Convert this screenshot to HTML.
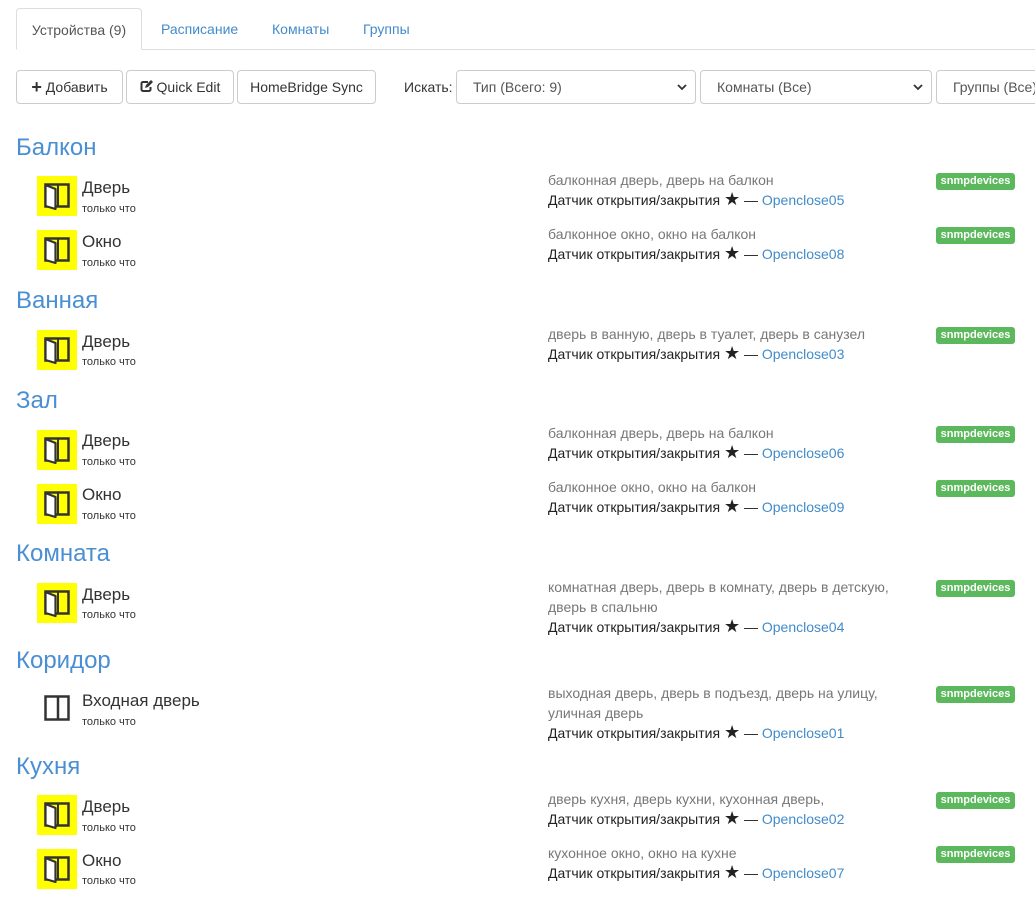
<!DOCTYPE html>
<html><head><meta charset="utf-8"><style>
*{box-sizing:border-box;margin:0;padding:0}
body{width:1035px;height:910px;overflow:hidden;background:#fff;font-family:"Liberation Sans",Arial,sans-serif;color:#333;position:relative}
.a{position:absolute;white-space:nowrap}
.tabline{position:absolute;left:16px;right:0;top:49px;border-top:1px solid #ddd}
.tab{position:absolute;top:8px;height:42px;font-size:14px;line-height:42px;color:#428bca}
.tab.act{left:16px;width:126px;border:1px solid #ddd;border-bottom-color:#fff;border-radius:4px 4px 0 0;background:#fff;color:#555;text-align:center}
.btn{position:absolute;top:70px;height:34px;border:1px solid #ccc;border-radius:4px;font-size:14px;line-height:32px;text-align:center;color:#333;background:#fff}
.sel{position:absolute;top:70px;height:34px;border:1px solid #ccc;border-radius:4px;font-size:14px;line-height:32px;padding-left:16px;color:#555;background:#fff}
.sel svg{position:absolute;right:8px;top:12px}
.h{position:absolute;left:16px;font-size:24px;color:#4a8fd3;line-height:30px}
.box{position:absolute;left:37px;width:40px;height:40px;background:#ff0}
.box svg{position:absolute;left:7px;top:7px}
.nm{position:absolute;left:82px;font-size:17px;line-height:20px;color:#333}
.tm{position:absolute;left:82px;font-size:11px;line-height:12px;color:#333}
.d{position:absolute;left:548px;font-size:14px;line-height:20px;color:#777}
.d b{font-weight:normal;color:#222}
.d i{font-style:normal;font-size:18px;line-height:14px}
.d a{color:#428bca;text-decoration:none}
.bd{position:absolute;left:936px;width:79px;height:17px;background:#5cb85c;border-radius:3px;color:#fff;font-size:11px;font-weight:bold;line-height:17px;text-align:center}
</style></head><body>
<div class="tabline"></div>
<div class="tab act">Устройства (9)</div>
<div class="tab" style="left:161px">Расписание</div>
<div class="tab" style="left:272px">Комнаты</div>
<div class="tab" style="left:363px">Группы</div>

<div class="btn" style="left:16px;width:107px"><span style="font-weight:bold;font-size:18px;vertical-align:-1px">+</span> Добавить</div>
<div class="btn" style="left:126px;width:108px"><svg width="13" height="13" viewBox="0 0 13 13" style="vertical-align:-1px"><path d="M8 2H3a1.5 1.5 0 0 0-1.5 1.5v6A1.5 1.5 0 0 0 3 11h6a1.5 1.5 0 0 0 1.5-1.5V7" fill="none" stroke="#333" stroke-width="2"/><path d="M5 8l1-3 5-5 2 2-5 5z" fill="#333"/></svg> Quick Edit</div>
<div class="btn" style="left:237px;width:139px">HomeBridge Sync</div>
<div class="a" style="left:404px;top:79px;font-size:14px">Искать:</div>
<div class="sel" style="left:456px;width:240px">Тип (Всего: 9)<svg width="10" height="8"><path d="M1 2l4 4 4-4" fill="none" stroke="#333" stroke-width="1.8"/></svg></div>
<div class="sel" style="left:700px;width:232px">Комнаты (Все)<svg width="10" height="8"><path d="M1 2l4 4 4-4" fill="none" stroke="#333" stroke-width="1.8"/></svg></div>
<div class="sel" style="left:936px;width:120px">Группы (Все)</div>

<div class="h" style="top:133px">Балкон</div>
<div class="h" style="top:286px">Ванная</div>
<div class="h" style="top:386px">Зал</div>
<div class="h" style="top:539px">Комната</div>
<div class="h" style="top:646px">Коридор</div>
<div class="h" style="top:752px">Кухня</div>

<svg width="0" height="0" style="position:absolute"><defs><g id="door"><rect x="1.5" y="1.5" width="23" height="22" fill="none" stroke="#333" stroke-width="2.5"/><line x1="14" y1="1" x2="14" y2="24" stroke="#333" stroke-width="2"/><path d="M1.5 2l10 4v20l-10-3z" fill="#fff" stroke="#333" stroke-width="2.2" stroke-linejoin="round"/></g></defs></svg>

<div class="box" style="top:176px"><svg width="27" height="28"><use href="#door"/></svg></div>
<div class="nm" style="top:178px">Дверь</div><div class="tm" style="top:203px">только что</div>
<div class="d" style="top:170px">балконная дверь, дверь на балкон<br><b>Датчик открытия/закрытия <i>★</i> — </b><a>Openclose05</a></div>
<div class="bd" style="top:173px">snmpdevices</div>

<div class="box" style="top:230px"><svg width="27" height="28"><use href="#door"/></svg></div>
<div class="nm" style="top:232px">Окно</div><div class="tm" style="top:257px">только что</div>
<div class="d" style="top:224px">балконное окно, окно на балкон<br><b>Датчик открытия/закрытия <i>★</i> — </b><a>Openclose08</a></div>
<div class="bd" style="top:227px">snmpdevices</div>

<div class="box" style="top:330px"><svg width="27" height="28"><use href="#door"/></svg></div>
<div class="nm" style="top:332px">Дверь</div><div class="tm" style="top:356px">только что</div>
<div class="d" style="top:324px">дверь в ванную, дверь в туалет, дверь в санузел<br><b>Датчик открытия/закрытия <i>★</i> — </b><a>Openclose03</a></div>
<div class="bd" style="top:327px">snmpdevices</div>

<div class="box" style="top:430px"><svg width="27" height="28"><use href="#door"/></svg></div>
<div class="nm" style="top:431px">Дверь</div><div class="tm" style="top:456px">только что</div>
<div class="d" style="top:423px">балконная дверь, дверь на балкон<br><b>Датчик открытия/закрытия <i>★</i> — </b><a>Openclose06</a></div>
<div class="bd" style="top:426px">snmpdevices</div>

<div class="box" style="top:484px"><svg width="27" height="28"><use href="#door"/></svg></div>
<div class="nm" style="top:485px">Окно</div><div class="tm" style="top:510px">только что</div>
<div class="d" style="top:477px">балконное окно, окно на балкон<br><b>Датчик открытия/закрытия <i>★</i> — </b><a>Openclose09</a></div>
<div class="bd" style="top:480px">snmpdevices</div>

<div class="box" style="top:583px"><svg width="27" height="28"><use href="#door"/></svg></div>
<div class="nm" style="top:585px">Дверь</div><div class="tm" style="top:609px">только что</div>
<div class="d" style="top:577px">комнатная дверь, дверь в комнату, дверь в детскую,<br>дверь в спальню<br><b>Датчик открытия/закрытия <i>★</i> — </b><a>Openclose04</a></div>
<div class="bd" style="top:580px">snmpdevices</div>

<svg class="a" style="left:44px;top:695px" width="27" height="27"><rect x="1.5" y="1.5" width="23" height="23" fill="none" stroke="#333" stroke-width="2.5"/><line x1="14" y1="1" x2="14" y2="25" stroke="#333" stroke-width="2.5"/></svg>
<div class="nm" style="top:691px">Входная дверь</div><div class="tm" style="top:716px">только что</div>
<div class="d" style="top:683px">выходная дверь, дверь в подъезд, дверь на улицу,<br>уличная дверь<br><b>Датчик открытия/закрытия <i>★</i> — </b><a>Openclose01</a></div>
<div class="bd" style="top:686px">snmpdevices</div>

<div class="box" style="top:795px"><svg width="27" height="28"><use href="#door"/></svg></div>
<div class="nm" style="top:797px">Дверь</div><div class="tm" style="top:822px">только что</div>
<div class="d" style="top:789px">дверь кухня, дверь кухни, кухонная дверь,<br><b>Датчик открытия/закрытия <i>★</i> — </b><a>Openclose02</a></div>
<div class="bd" style="top:792px">snmpdevices</div>

<div class="box" style="top:849px"><svg width="27" height="28"><use href="#door"/></svg></div>
<div class="nm" style="top:851px">Окно</div><div class="tm" style="top:875px">только что</div>
<div class="d" style="top:843px">кухонное окно, окно на кухне<br><b>Датчик открытия/закрытия <i>★</i> — </b><a>Openclose07</a></div>
<div class="bd" style="top:846px">snmpdevices</div>
</body></html>
